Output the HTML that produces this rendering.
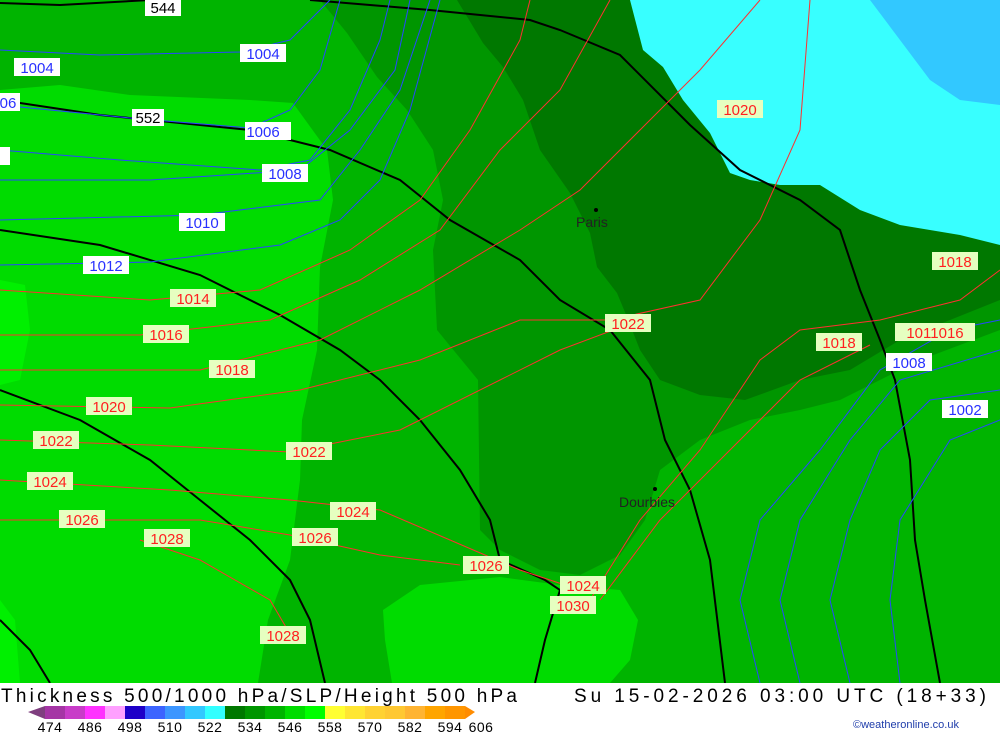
<!DOCTYPE html>
<html><head><meta charset="utf-8"><style>
body{margin:0;width:1000px;height:733px;overflow:hidden;background:#fff;font-family:"Liberation Sans","DejaVu Sans",sans-serif}
svg{display:block}
</style></head><body>
<svg width="1000" height="733" viewBox="0 0 1000 733" xmlns="http://www.w3.org/2000/svg">
<rect x="0" y="0" width="1000" height="683" fill="#00b400"/>
<!-- bright left -->
<path d="M0,90 L60,85 L130,95 L250,100 L293,103 L327,150 L333,200 L320,267 L317,350 L302,420 L300,480 L290,560 L268,620 L258,683 L0,683 Z" fill="#00dc00"/>
<path d="M0,280 L25,285 L30,330 L20,380 L0,385 Z" fill="#00f000"/>
<path d="M0,600 L15,620 L20,683 L0,683 Z" fill="#00f000"/>
<!-- bright bottom middle -->
<path d="M383,610 L420,585 L500,577 L560,585 L620,590 L638,620 L630,660 L610,683 L392,683 L385,640 Z" fill="#00dc00"/>
<!-- mid-dark 009600 -->
<path d="M320,0 L347,33 L377,77 L407,110 L433,150 L443,200 L433,250 L437,330 L478,380 L480,530 L500,550 L540,570 L580,575 L620,555 L645,520 L660,470 L700,440 L750,420 L800,410 L840,400 L880,380 L920,360 L1000,330 L1000,240 L750,180 L630,0 Z" fill="#009600"/>
<!-- dark 007800 -->
<path d="M457,0 L483,43 L503,67 L523,100 L540,150 L570,193 L590,233 L597,267 L617,293 L627,317 L640,350 L660,380 L700,395 L745,400 L800,380 L850,370 L900,340 L1000,300 L1000,245 L960,235 L900,225 L860,210 L820,185 L780,185 L750,180 L730,173 L710,133 L683,100 L663,67 L643,50 L630,0 Z" fill="#007800"/>
<!-- cyan sea -->
<path d="M630,0 L1000,0 L1000,245 L960,235 L900,225 L860,210 L820,185 L780,185 L750,180 L730,173 L710,133 L683,100 L663,67 L643,50 Z" fill="#38ffff"/>
<path d="M870,0 L1000,0 L1000,105 L960,100 L930,80 L900,40 Z" fill="#32c8ff"/>
<!-- black thickness lines -->
<g fill="none" stroke="#000" stroke-width="2">
<path d="M0,3 L60,5 L150,0 M310,0 L430,10 L530,20 L560,30 L620,55 L690,125 L740,170 L800,200 L840,230 L860,290 L880,340 L895,380 L910,460 L915,540 L925,600 L940,683"/>
<path d="M0,100 L100,115 L250,130 L330,150 L400,180 L450,220 L520,260 L560,300 L610,330 L650,380 L665,440 L690,490 L710,560 L725,683"/>
<path d="M0,230 L100,245 L200,275 L280,315 L340,350 L380,380 L420,420 L460,470 L490,520 L500,560 L545,580 L560,590 L545,640 L535,683"/>
<path d="M0,390 L80,420 L150,460 L200,500 L250,540 L290,580 L310,620 L325,683"/>
<path d="M0,620 L30,650 L50,683"/>
</g>
<!-- blue isobars -->
<g fill="none" stroke="#2846ff" stroke-width="1">
<path d="M0,50 L100,55 L240,52 L290,40 L320,10 L330,0"/>
<path d="M0,105 L130,118 L250,128 L290,110 L320,70 L340,0"/>
<path d="M0,150 L120,160 L260,170 L310,160 L350,110 L380,40 L390,0"/>
<path d="M0,180 L150,180 L300,170 L350,130 L395,70 L410,0"/>
<path d="M0,220 L200,215 L320,200 L360,150 L400,90 L430,0"/>
<path d="M0,265 L150,262 L280,245 L340,220 L380,180 L410,110 L440,0"/>
<path d="M760,683 L740,600 L760,520 L820,450 L880,370 L950,330 L1000,320"/>
<path d="M800,683 L780,600 L800,520 L850,440 L900,380 L1000,350"/>
<path d="M850,683 L830,600 L850,520 L880,450 L930,400 L1000,390"/>
<path d="M900,683 L890,600 L900,520 L950,440 L1000,420"/>
</g>
<!-- red isobars -->
<g fill="none" stroke="#ff3030" stroke-width="1">
<path d="M0,290 L150,300 L260,290 L350,250 L420,200 L470,130 L520,40 L530,0"/>
<path d="M0,335 L140,335 L270,320 L360,280 L440,230 L500,150 L560,90 L610,0"/>
<path d="M0,370 L200,370 L320,340 L420,290 L520,230 L580,190 L640,130 L700,70 L760,0"/>
<path d="M0,405 L170,408 L300,390 L420,360 L520,320 L610,320 L700,300 L760,220 L800,130 L810,0"/>
<path d="M0,440 L150,445 L290,452 L400,430 L500,380 L560,350 L640,320"/>
<path d="M0,480 L170,490 L290,500 L380,510 L450,540 L520,570 L580,590"/>
<path d="M0,520 L200,520 L290,535 L380,555 L460,565"/>
<path d="M140,540 L200,560 L270,600 L290,634"/>
<path d="M590,600 L640,520 L700,450 L760,360 L800,330 L880,320 L960,300 L1000,270"/>
<path d="M600,600 L660,520 L720,460 L800,380 L870,345"/>
</g>
<!-- labels -->
<g font-size="15" text-anchor="middle">
<g fill="#fff"><rect x="14" y="58" width="46" height="18"/><rect x="240" y="44" width="46" height="18"/><rect x="0" y="93" width="20" height="18"/><rect x="132" y="109" width="32" height="17"/><rect x="245" y="122" width="46" height="18"/><rect x="0" y="147" width="10" height="18"/><rect x="262" y="164" width="46" height="18"/><rect x="179" y="213" width="46" height="18"/><rect x="83" y="256" width="46" height="18"/><rect x="145" y="0" width="36" height="16"/><rect x="942" y="400" width="46" height="18"/><rect x="886" y="353" width="46" height="18"/></g>
<g fill="#2830ff"><text x="37" y="73">1004</text><text x="263" y="59">1004</text><text x="8" y="108">06</text><text x="263" y="137">1006</text><text x="285" y="179">1008</text><text x="202" y="228">1010</text><text x="106" y="271">1012</text><text x="965" y="415">1002</text><text x="909" y="368">1008</text></g>
<text x="148" y="123" fill="#000">552</text><text x="163" y="13" fill="#000">544</text>
<g fill="#e6ffc0"><rect x="170" y="289" width="46" height="18"/><rect x="143" y="325" width="46" height="18"/><rect x="209" y="360" width="46" height="18"/><rect x="86" y="397" width="46" height="18"/><rect x="33" y="431" width="46" height="18"/><rect x="286" y="442" width="46" height="18"/><rect x="27" y="472" width="46" height="18"/><rect x="330" y="502" width="46" height="18"/><rect x="59" y="510" width="46" height="18"/><rect x="144" y="529" width="46" height="18"/><rect x="292" y="528" width="46" height="18"/><rect x="463" y="556" width="46" height="18"/><rect x="560" y="576" width="46" height="18"/><rect x="550" y="596" width="46" height="18"/><rect x="260" y="626" width="46" height="18"/><rect x="605" y="314" width="46" height="18"/><rect x="717" y="100" width="46" height="18"/><rect x="932" y="252" width="46" height="18"/><rect x="816" y="333" width="46" height="18"/><rect x="895" y="323" width="80" height="18"/></g>
<g fill="#ff2020"><text x="193" y="304">1014</text><text x="166" y="340">1016</text><text x="232" y="375">1018</text><text x="109" y="412">1020</text><text x="56" y="446">1022</text><text x="309" y="457">1022</text><text x="50" y="487">1024</text><text x="353" y="517">1024</text><text x="82" y="525">1026</text><text x="167" y="544">1028</text><text x="315" y="543">1026</text><text x="486" y="571">1026</text><text x="583" y="591">1024</text><text x="573" y="611">1030</text><text x="283" y="641">1028</text><text x="628" y="329">1022</text><text x="740" y="115">1020</text><text x="955" y="267">1018</text><text x="839" y="348">1018</text><text x="935" y="338">1011016</text></g>
</g>
<circle cx="596" cy="210" r="2" fill="#000"/><text x="576" y="227" font-size="14" fill="#222">Paris</text>
<circle cx="655" cy="489" r="2" fill="#000"/><text x="619" y="507" font-size="14" fill="#222">Dourbies</text>
<!-- footer -->
<rect x="0" y="683" width="1000" height="50" fill="#fff"/>
<text x="1" y="702" font-size="19" fill="#000" textLength="516" lengthAdjust="spacing">Thickness 500/1000 hPa/SLP/Height 500 hPa</text>
<text x="574" y="702" font-size="19" fill="#000" textLength="412" lengthAdjust="spacing">Su 15-02-2026 03:00 UTC (18+33)</text>
<polygon points="28,712 45,706 45,719" fill="#7f3f7f"/>
<g>
<rect x="45" y="706" width="20" height="13" fill="#a535a5"/><rect x="65" y="706" width="20" height="13" fill="#c83cc8"/><rect x="85" y="706" width="20" height="13" fill="#ff32ff"/><rect x="105" y="706" width="20" height="13" fill="#ffa0ff"/><rect x="125" y="706" width="20" height="13" fill="#1e00c8"/><rect x="145" y="706" width="20" height="13" fill="#3c64ff"/><rect x="165" y="706" width="20" height="13" fill="#3c96ff"/><rect x="185" y="706" width="20" height="13" fill="#32c8ff"/><rect x="205" y="706" width="20" height="13" fill="#32ffff"/><rect x="225" y="706" width="20" height="13" fill="#007800"/><rect x="245" y="706" width="20" height="13" fill="#009600"/><rect x="265" y="706" width="20" height="13" fill="#00b400"/><rect x="285" y="706" width="20" height="13" fill="#00dc00"/><rect x="305" y="706" width="20" height="13" fill="#00ff00"/><rect x="325" y="706" width="20" height="13" fill="#ffff32"/><rect x="345" y="706" width="20" height="13" fill="#ffe632"/><rect x="365" y="706" width="20" height="13" fill="#ffd232"/><rect x="385" y="706" width="20" height="13" fill="#ffc832"/><rect x="405" y="706" width="20" height="13" fill="#ffb432"/><rect x="425" y="706" width="20" height="13" fill="#ffa500"/><rect x="445" y="706" width="20" height="13" fill="#ff9600"/>
</g>
<polygon points="465,706 475,712 465,719" fill="#ff8c00"/>
<g font-size="14" fill="#000" text-anchor="middle" letter-spacing="0.5">
<text x="50" y="732">474</text><text x="90" y="732">486</text><text x="130" y="732">498</text><text x="170" y="732">510</text><text x="210" y="732">522</text><text x="250" y="732">534</text><text x="290" y="732">546</text><text x="330" y="732">558</text><text x="370" y="732">570</text><text x="410" y="732">582</text><text x="450" y="732">594</text><text x="481" y="732">606</text>
</g>
<text x="853" y="728" font-size="11" fill="#1e3caa">©weatheronline.co.uk</text>
</svg>
</body></html>
